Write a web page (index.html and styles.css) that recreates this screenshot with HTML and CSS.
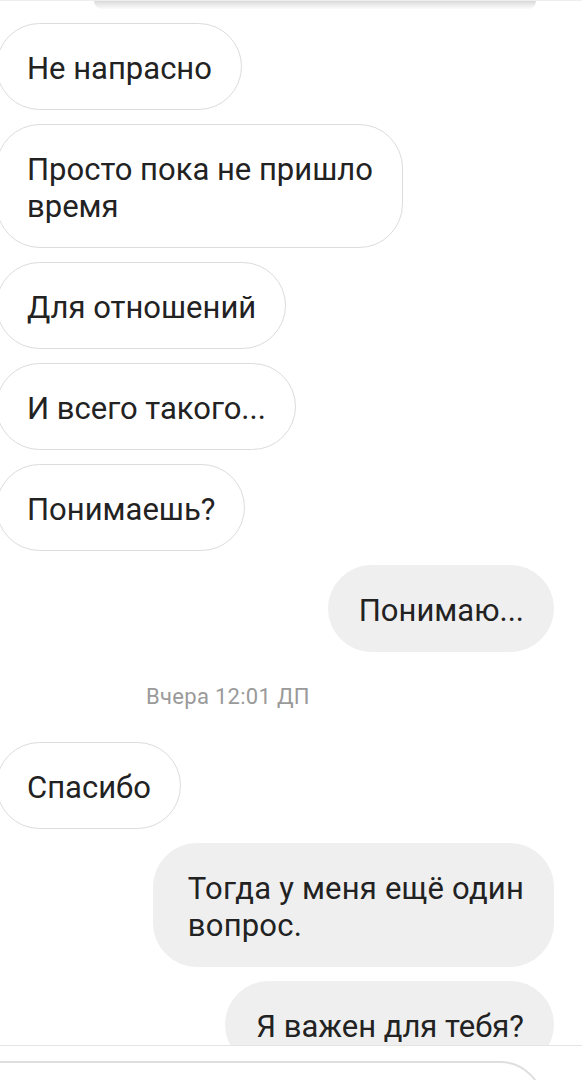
FILE: index.html
```html
<!DOCTYPE html>
<html lang="ru">
<head>
<meta charset="utf-8">
<title>Чат</title>
<link rel="stylesheet" href="styles.css">
</head>
<body>
<div class="screen">
  <div class="top-strip"><div class="prev-bubble"></div></div>
  <div class="chat">
    <div class="msg in">Не напрасно</div>
    <div class="msg in">Просто пока не пришло<br>время</div>
    <div class="msg in">Для отношений</div>
    <div class="msg in">И всего такого...</div>
    <div class="msg in">Понимаешь?</div>
    <div class="msg out">Понимаю...</div>
    <div class="stamp">Вчера 12:01 ДП</div>
    <div class="msg in">Спасибо</div>
    <div class="msg out wide">Тогда у меня ещё один<br>вопрос.</div>
    <div class="msg out">Я важен для тебя?</div>
  </div>
  <div class="composer"><div class="input-box"></div></div>
</div>
</body>
</html>
```
FILE: styles.css
```css
* { box-sizing: border-box; }
html, body { margin: 0; padding: 0; background: #fff; }
.screen {
  width: 582px;
  height: 1080px;
  overflow: hidden;
  display: flex;
  flex-direction: column;
  font-family: Roboto, "Noto Sans", sans-serif;
  color: #222;
}
.top-strip {
  height: 10px;
  flex: none;
  border-top: 1px solid #eeeeee;
}
.prev-bubble {
  margin: 0 46px 0 94px;
  height: 8px;
  background: linear-gradient(#dadada, #efefef 60%, #fafafa);
  border-radius: 0 0 14px 14px;
}
.chat {
  flex: 1;
  min-height: 0;
  overflow: hidden;
  display: flex;
  flex-direction: column;
  gap: 14px;
  padding-top: 13px;
}
.msg {
  flex: none;
  font-size: 31px;
  line-height: 37px;
  padding: 26px 29px 22px 30px;
  border-radius: 44px;
}
.msg.in {
  align-self: flex-start;
  margin-left: -4px;
  background: #fff;
  border: 1.5px solid #dcdcdc;
}
.msg.out {
  align-self: flex-end;
  margin-right: 28px;
  background: #efefef;
  border: 1.5px solid #efefef;
}
.msg.out.wide { padding-left: 34px; letter-spacing: 0.2px; }
.stamp {
  flex: none;
  padding: 20px 0 20px 146px;
  font-size: 22px;
  letter-spacing: 0.3px;
  line-height: 22px;
  color: #9a9a9a;
}
.composer {
  flex: none;
  height: 35px;
  border-top: 1.5px solid #e4e4e4;
  background: #fff;
  padding-top: 15px;
}
.input-box {
  width: 548px;
  height: 60px;
  margin-left: -4px;
  border: 2px solid #dedede;
  border-radius: 0 44px 0 0;
}
```
